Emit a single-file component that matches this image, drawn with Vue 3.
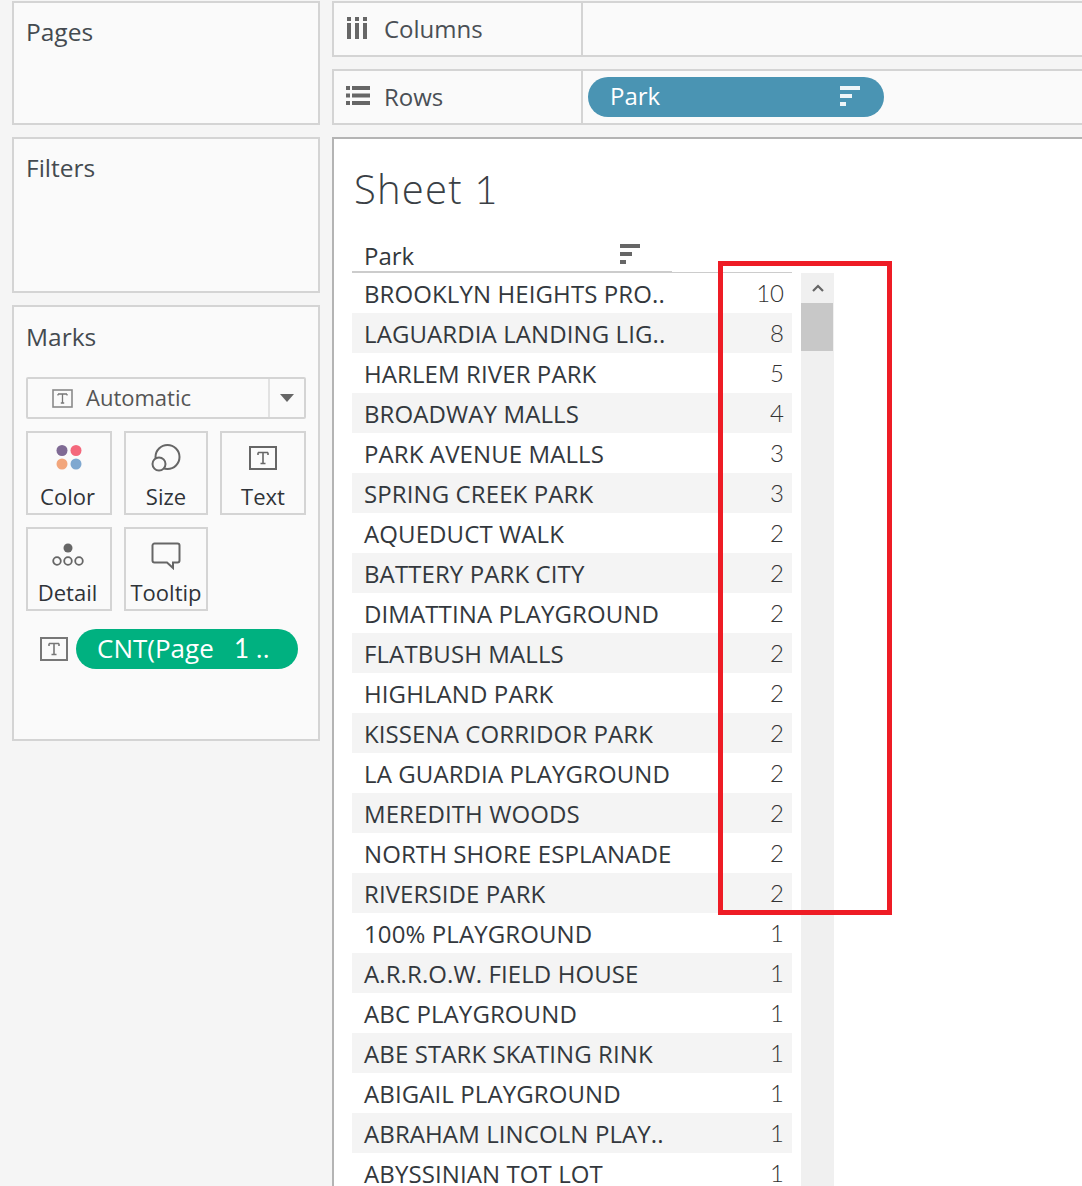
<script setup>
const rows = [
  ['BROOKLYN HEIGHTS PRO..', 10],
  ['LAGUARDIA LANDING LIG..', 8],
  ['HARLEM RIVER PARK', 5],
  ['BROADWAY MALLS', 4],
  ['PARK AVENUE MALLS', 3],
  ['SPRING CREEK PARK', 3],
  ['AQUEDUCT WALK', 2],
  ['BATTERY PARK CITY', 2],
  ['DIMATTINA PLAYGROUND', 2],
  ['FLATBUSH MALLS', 2],
  ['HIGHLAND PARK', 2],
  ['KISSENA CORRIDOR PARK', 2],
  ['LA GUARDIA PLAYGROUND', 2],
  ['MEREDITH WOODS', 2],
  ['NORTH SHORE ESPLANADE', 2],
  ['RIVERSIDE PARK', 2],
  ['100% PLAYGROUND', 1],
  ['A.R.R.O.W. FIELD HOUSE', 1],
  ['ABC PLAYGROUND', 1],
  ['ABE STARK SKATING RINK', 1],
  ['ABIGAIL PLAYGROUND', 1],
  ['ABRAHAM LINCOLN PLAY..', 1],
  ['ABYSSINIAN TOT LOT', 1]
]
</script>

<template>
  <div class="page">
    <aside class="side">
      <section class="panel pages"><h3>Pages</h3></section>
      <section class="panel filters"><h3>Filters</h3></section>
      <section class="panel marks">
        <h3>Marks</h3>
        <div class="mark-select">
          <svg width="21" height="19" viewBox="0 0 21 19">
            <rect x="1" y="1" width="19" height="17" fill="none" stroke="#8a8a8a" stroke-width="1.6" />
            <path d="M6 5h9M10.500 5v9M8.800 14h3.400M6 5v1.600M15 5v1.600" fill="none" stroke="#777" stroke-width="1.300" />
          </svg>
          <span class="mark-name">Automatic</span>
          <span class="caret-box"><span class="caret"></span></span>
        </div>
        <div class="cards">
          <div class="card c1">
            <svg width="28" height="26" viewBox="0 0 28 26">
              <circle cx="8" cy="6.500" r="5.500" fill="#7f6a94" />
              <circle cx="22" cy="6.500" r="5.500" fill="#f4687c" />
              <circle cx="8" cy="20" r="5.500" fill="#f2a67c" />
              <circle cx="22" cy="20" r="5.500" fill="#7fa8d0" />
            </svg>
            <span>Color</span>
          </div>
          <div class="card c2">
            <svg width="30" height="28" viewBox="0 0 30 28">
              <circle cx="16.500" cy="13" r="12" fill="none" stroke="#666" stroke-width="2" />
              <circle cx="8" cy="20" r="6.500" fill="#fafafa" stroke="#666" stroke-width="2" />
            </svg>
            <span>Size</span>
          </div>
          <div class="card c3">
            <svg class="low" width="28" height="24" viewBox="0 0 28 24">
              <rect x="1" y="1" width="26" height="22" fill="none" stroke="#666" stroke-width="2" />
              <path d="M9 6.500h10M14 6.500v11M11.500 17.500h5M9 6.500v2.500M19 6.500v2.500" fill="none" stroke="#666" stroke-width="1.600" />
            </svg>
            <span>Text</span>
          </div>
          <div class="card c1">
            <svg class="low" width="32" height="26" viewBox="0 0 32 26">
              <circle cx="16" cy="6" r="4.500" fill="#666" />
              <circle cx="5" cy="19" r="3.800" fill="none" stroke="#666" stroke-width="1.800" />
              <circle cx="16" cy="19" r="3.800" fill="none" stroke="#666" stroke-width="1.800" />
              <circle cx="27" cy="19" r="3.800" fill="none" stroke="#666" stroke-width="1.800" />
            </svg>
            <span>Detail</span>
          </div>
          <div class="card c2">
            <svg class="low" width="30" height="28" viewBox="0 0 30 28">
              <path d="M3.500 1.500h23a2 2 0 0 1 2 2v15a2 2 0 0 1-2 2h-4.500v5.500l-6-5.500h-12.500a2 2 0 0 1-2-2v-15a2 2 0 0 1 2-2z" fill="none" stroke="#666" stroke-width="2" />
            </svg>
            <span>Tooltip</span>
          </div>
        </div>
        <div class="mark-field">
          <svg width="28" height="24" viewBox="0 0 28 24">
            <rect x="1" y="1" width="26" height="22" fill="none" stroke="#777" stroke-width="2" />
            <path d="M9 6.500h10M14 6.500v11M11.500 17.500h5M9 6.500v2.500M19 6.500v2.500" fill="none" stroke="#777" stroke-width="1.600" />
          </svg>
          <div class="pill green">CNT(Page&nbsp;&nbsp;&nbsp;<span class="lato">1</span>&nbsp;..</div>
        </div>
      </section>
    </aside>

    <main class="main">
      <div class="shelf">
        <div class="shelf-label">
          <svg class="shelf-icon" width="22" height="24" viewBox="0 0 22 24">
            <path d="M1 1h4v4h-4zM9 1h4v4h-4zM17 1h4v4h-4zM1 7h4v16h-4zM9 7h4v16h-4zM17 7h4v16h-4z" fill="#666" />
          </svg>
          <span class="label-cols">Columns</span>
        </div>
        <div class="shelf-body"></div>
      </div>
      <div class="shelf">
        <div class="shelf-label">
          <svg class="shelf-icon" width="24" height="21" viewBox="0 0 24 21">
            <path d="M0 1h4v4h-4zM6 1h18v4h-18zM0 8.500h4v4h-4zM6 8.500h18v4h-18zM0 16h4v4h-4zM6 16h18v4h-18z" fill="#666" />
          </svg>
          <span class="label-rows">Rows</span>
        </div>
        <div class="shelf-body">
          <div class="pill blue">
            <span>Park</span>
            <svg width="20" height="20" viewBox="0 0 20 20">
              <path d="M0 0h20v4h-20zM0 8h12v4h-12zM0 16h6v4h-6z" fill="#eef5f8" />
            </svg>
          </div>
        </div>
      </div>

      <div class="view">
        <h1 class="title">Sheet <span class="lato">1</span></h1>
        <div class="sheet">
          <div class="table">
            <div class="head">
              <span>Park</span>
              <svg width="20" height="20" viewBox="0 0 20 20">
                <path d="M0 0h20v4h-20zM0 8h12v4h-12zM0 16h6v4h-6z" fill="#666" />
              </svg>
            </div>
            <div v-for="(r, i) in rows" :key="r[0]" class="row" :class="{ odd: i % 2 === 1 }">
              <span class="name">{{ r[0] }}</span>
              <span class="num">{{ r[1] }}</span>
            </div>
          </div>
          <div class="scroll">
            <div class="arrow">
              <svg width="12" height="8" viewBox="0 0 12 8">
                <path d="M1 7l5-5 5 5" fill="none" stroke="#666" stroke-width="2.200" />
              </svg>
            </div>
            <div class="thumb"></div>
          </div>
        </div>
        <div class="highlight"></div>
      </div>
    </main>
  </div>
</template>

<style>
html, body {
  margin: 0;
  background: #f5f5f5;
  overflow: hidden;
}
</style>

<style scoped>
.page {
  width: 1082px;
  height: 1186px;
  overflow: hidden;
  display: flex;
  gap: 12px;
  padding: 1px 0 0 12px;
  box-sizing: border-box;
  background: #f5f5f5;
  font-family: "Open Sans", "Liberation Sans", sans-serif;
  color: #33383d;
}
.lato { font-family: Lato, "Open Sans", sans-serif; }
.side {
  width: 308px;
  flex: none;
  display: flex;
  flex-direction: column;
  gap: 12px;
}
.panel {
  box-sizing: border-box;
  border: 2px solid #d4d4d4;
  background: #fafafa;
  padding: 12px 12px 0;
}
.panel h3 {
  margin: 0;
  font-size: 24.5px;
  font-weight: 400;
  line-height: 34px;
  color: #444a50;
}
.pages { height: 124px; }
.filters { height: 156px; }
.marks { height: 436px; padding-top: 13px; }
.mark-select {
  margin-top: 23px;
  height: 42px;
  box-sizing: border-box;
  border: 2px solid #d4d4d4;
  border-radius: 2px;
  display: flex;
  align-items: center;
  padding-left: 24px;
  font-size: 22px;
  color: #555;
}
.mark-name { margin-left: 13px; flex: 1; padding-bottom: 2px; }
.caret-box {
  width: 34px;
  height: 100%;
  border-left: 2px solid #e2e2e2;
  display: flex;
  align-items: center;
  justify-content: center;
}
.caret {
  width: 0;
  height: 0;
  border: 7px solid transparent;
  border-top: 8px solid #666;
  border-bottom: 0;
}
.cards {
  margin-top: 12px;
  display: grid;
  grid-template-columns: 86px 84px 86px;
  grid-auto-rows: 84px;
  gap: 12px;
}
.card {
  box-sizing: border-box;
  border: 2px solid #d4d4d4;
  display: flex;
  flex-direction: column;
  align-items: center;
  justify-content: space-between;
  padding: 11px 0 2px;
  font-size: 22px;
  line-height: 30px;
  color: #2f3338;
}
.card.c1 { padding-right: 3px; }
.card svg.low { margin-top: 2px; }
.mark-field {
  margin-top: 18px;
  display: flex;
  align-items: center;
  gap: 8px;
  padding-left: 14px;
}
.pill {
  height: 40px;
  border-radius: 20px;
  color: #fff;
  box-sizing: border-box;
  display: flex;
  align-items: center;
  padding-bottom: 3px;
  white-space: pre;
}
.pill.green {
  width: 222px;
  background: #00b180;
  padding-left: 21px;
  font-size: 26px;
}
.pill.blue {
  width: 296px;
  background: #4a94b3;
  padding: 0 24px 3px 22px;
  justify-content: space-between;
  font-size: 24px;
}
.main {
  flex: 1;
  min-width: 0;
  display: flex;
  flex-direction: column;
  gap: 12px;
}
.shelf {
  height: 56px;
  flex: none;
  box-sizing: border-box;
  border: 2px solid #d4d4d4;
  border-right: 0;
  background: #fafafa;
  display: flex;
}
.shelf-label {
  width: 249px;
  flex: none;
  box-sizing: border-box;
  border-right: 2px solid #d4d4d4;
  display: flex;
  align-items: center;
  padding: 0 0 2px 12px;
  font-size: 24px;
  color: #4a4f55;
}
.label-cols { margin-left: 16px; }
.label-rows { margin-left: 14px; }
.shelf-icon { flex: none; margin-top: -1px; }
.shelf-body {
  flex: 1;
  display: flex;
  align-items: center;
  padding-left: 5px;
}
.view {
  position: relative;
  flex: 1;
  box-sizing: border-box;
  border-top: 2px solid #b4b4b4;
  border-left: 2px solid #b4b4b4;
  background: #fff;
  padding: 0 0 0 18px;
}
.title {
  margin: 23px 0 0 2px;
  font-size: 40px;
  line-height: 54px;
  font-weight: 300;
  letter-spacing: 1.2px;
  color: #3a3f45;
}
.sheet {
  margin-top: 17px;
  display: flex;
  gap: 9px;
}
.table { width: 440px; flex: none; }
.head {
  height: 40px;
  box-sizing: border-box;
  border-bottom: 1px solid #ccc;
  position: relative;
  display: flex;
  align-items: center;
  justify-content: space-between;
  width: 100%;
  padding: 5px 152px 0 12px;
  font-size: 24px;
  font-weight: 500;
}
.head::after {
  content: "";
  position: absolute;
  left: 0;
  bottom: -1px;
  width: 320px;
  height: 2px;
  background: #ccc;
}
.head svg { margin-top: -2px; }
.row {
  height: 40px;
  display: flex;
  align-items: center;
  justify-content: space-between;
  padding: 0 8px 0 12px;
  font-size: 24px;
  white-space: nowrap;
}
.row.odd { background: #f4f4f4; }
.name { font-weight: 500; color: #33383d; letter-spacing: 0.1px; }
.num { font-family: Lato, "Open Sans", sans-serif; font-weight: 300; color: #333; padding-bottom: 2px; }
.scroll {
  width: 33px;
  flex: none;
  margin-top: 40px;
  background: #f0f0f0;
}
.arrow {
  height: 30px;
  display: flex;
  align-items: center;
  justify-content: center;
}
.thumb {
  width: 32px;
  height: 48px;
  background: #c8c8c8;
}
.highlight {
  position: absolute;
  left: 384px;
  top: 122px;
  width: 174px;
  height: 654px;
  box-sizing: border-box;
  border: 5px solid #ee1c25;
}
</style>
